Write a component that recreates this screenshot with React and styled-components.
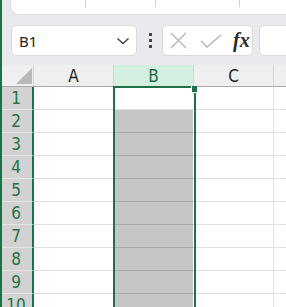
import React from 'react';
import styled, { createGlobalStyle } from 'styled-components';

const GREEN = '#1e7145';

const GlobalStyle = createGlobalStyle`
  html, body {
    margin: 0;
    padding: 0;
    background: #e8eaed;
  }
`;

const rows = [1, 2, 3, 4, 5, 6, 7, 8, 9, 10];

export default function App() {
  return (
    <>
      <GlobalStyle />
      <Window>
        <RibbonTail>
          <RibbonGroup $w={74} />
          <RibbonGroup $w={69} />
          <RibbonGroup $w={83} />
          <RibbonGroup $w={0} $last />
        </RibbonTail>

        <FormulaBar>
          <NameBox>
            <span>B1</span>
            <svg width="14" height="8" viewBox="0 0 14 8">
              <path d="M1.5 1.5 L7 6.5 L12.5 1.5" fill="none" stroke="#444" strokeWidth="1.4" />
            </svg>
          </NameBox>
          <Dots>
            <i />
            <i />
            <i />
          </Dots>
          <FxBox>
            <svg width="18" height="17" viewBox="0 0 18 17">
              <path d="M1 1 L16 16 M16 1 L1 16" stroke="#b3b3b3" strokeWidth="1.3" fill="none" />
            </svg>
            <svg width="22" height="14" viewBox="0 0 22 14">
              <path d="M1 7 L7 13 L21 1" stroke="#b3b3b3" strokeWidth="1.3" fill="none" />
            </svg>
            <Fx>fx</Fx>
          </FxBox>
          <FormulaInput />
        </FormulaBar>

        <Sheet>
          <Grid>
            <Corner>
              <svg width="16" height="16" viewBox="0 0 16 16">
                <polygon points="0,16 16,16 16,0" fill="#b8b8b8" />
              </svg>
            </Corner>
            <ColHead>A</ColHead>
            <ColHead $active>B</ColHead>
            <ColHead>C</ColHead>
            <ColHead $last />

            {rows.map((r) => (
              <React.Fragment key={r}>
                <RowHead>{r}</RowHead>
                <Cell />
                <Cell $selected={r > 1} $inSel />
                <Cell />
                <Cell $last />
              </React.Fragment>
            ))}
          </Grid>
          <Selection>
            <FillHandle />
          </Selection>
        </Sheet>
      </Window>
    </>
  );
}

const Window = styled.div`
  width: 286px;
  height: 307px;
  box-sizing: border-box;
  border-left: 2px solid ${GREEN};
  background: #e8eaed;
  overflow: hidden;
  font-family: "Noto Sans", "Liberation Sans", sans-serif;
`;

const RibbonTail = styled.div`
  display: flex;
  height: 15px;
  margin-left: 8px;
  background: #fff;
  border-left: 1px solid #dcdcdc;
  border-bottom: 1px solid #dcdcdc;
  border-bottom-left-radius: 9px;
  box-sizing: border-box;
`;

const RibbonGroup = styled.div`
  flex: ${(p) => (p.$last ? '1' : `0 0 ${p.$w}px`)};
  height: 7px;
  border-right: ${(p) => (p.$last ? 'none' : '1px solid #cfcfcf')};
`;

const FormulaBar = styled.div`
  display: flex;
  align-items: center;
  height: 31px;
  margin-top: 10px;
  padding-left: 9px;
`;

const NameBox = styled.div`
  flex: 0 0 126px;
  height: 31px;
  box-sizing: border-box;
  display: flex;
  align-items: center;
  justify-content: space-between;
  padding: 0 6px 0 7px;
  background: #fff;
  border: 1px solid #d9d9d9;
  border-radius: 5px;
  font-size: 15px;
  color: #222;
`;

const Dots = styled.div`
  display: flex;
  flex-direction: column;
  gap: 3px;
  margin: 0 10px 0 12px;
  i {
    display: block;
    width: 3px;
    height: 3px;
    background: #444;
  }
`;

const FxBox = styled.div`
  flex: 0 0 91px;
  height: 31px;
  box-sizing: border-box;
  display: flex;
  align-items: center;
  gap: 12px;
  padding-left: 7px;
  background: #fff;
  border: 1px solid #d9d9d9;
  border-radius: 5px;
`;

const Fx = styled.span`
  font-family: "Liberation Serif", "DejaVu Serif", serif;
  font-style: italic;
  font-weight: 700;
  font-size: 20px;
  color: #2a2a2a;
  margin-left: -1px;
`;

const FormulaInput = styled.div`
  flex: 1;
  height: 31px;
  margin-left: 6px;
  margin-right: -10px;
  box-sizing: border-box;
  background: #fff;
  border: 1px solid #d9d9d9;
  border-radius: 5px;
`;

const Sheet = styled.div`
  position: relative;
  margin-top: 9px;
`;

const Grid = styled.div`
  display: grid;
  grid-template-columns: 32px 80px 80px 80px 1fr;
  grid-auto-rows: 23px;
  grid-template-rows: 22px;
  font-family: "Liberation Sans Narrow", "DejaVu Sans Condensed", "Liberation Sans", sans-serif;
  font-size: 17px;
`;

const Corner = styled.div`
  background: #efefef;
  border-right: 1px solid #d4d4d4;
  border-bottom: 1px solid #a9a9a9;
  display: flex;
  align-items: flex-end;
  justify-content: flex-end;
  padding: 0 1px 2px 0;
  svg {
    display: block;
  }
`;

const ColHead = styled.div`
  background: ${(p) => (p.$active ? '#d3f0e0' : '#efefef')};
  color: ${(p) => (p.$active ? '#1d6b45' : '#222')};
  border-right: ${(p) => (p.$last ? 'none' : '1px solid #d4d4d4')};
  border-bottom: 1px solid #a9a9a9;
  display: flex;
  align-items: center;
  justify-content: center;
  padding-top: 1px;
`;

const RowHead = styled.div`
  background: #d2d2d2;
  color: #217346;
  border-right: 2px solid ${GREEN};
  border-bottom: 1px solid #e4e4e4;
  display: flex;
  align-items: center;
  justify-content: center;
  padding-right: 2px;
`;

const Cell = styled.div`
  background: ${(p) => (p.$selected ? '#c6c6c6' : '#fff')};
  border-bottom: 1px solid ${(p) => (p.$selected ? '#a9a9a9' : '#e1e1e1')};
  border-right: ${(p) => (p.$last ? 'none' : `1px solid ${p.$inSel ? '#fff' : '#e1e1e1'}`)};
`;

const Selection = styled.div`
  position: absolute;
  left: 111px;
  top: 21px;
  bottom: -20px;
  width: 83px;
  box-sizing: border-box;
  border: 2px solid ${GREEN};
  pointer-events: none;
`;

const FillHandle = styled.div`
  position: absolute;
  right: -3px;
  top: -2px;
  width: 6px;
  height: 7px;
  box-sizing: border-box;
  background: ${GREEN};
  border-left: 1px solid #fff;
  border-bottom: 1px solid #fff;
`;
